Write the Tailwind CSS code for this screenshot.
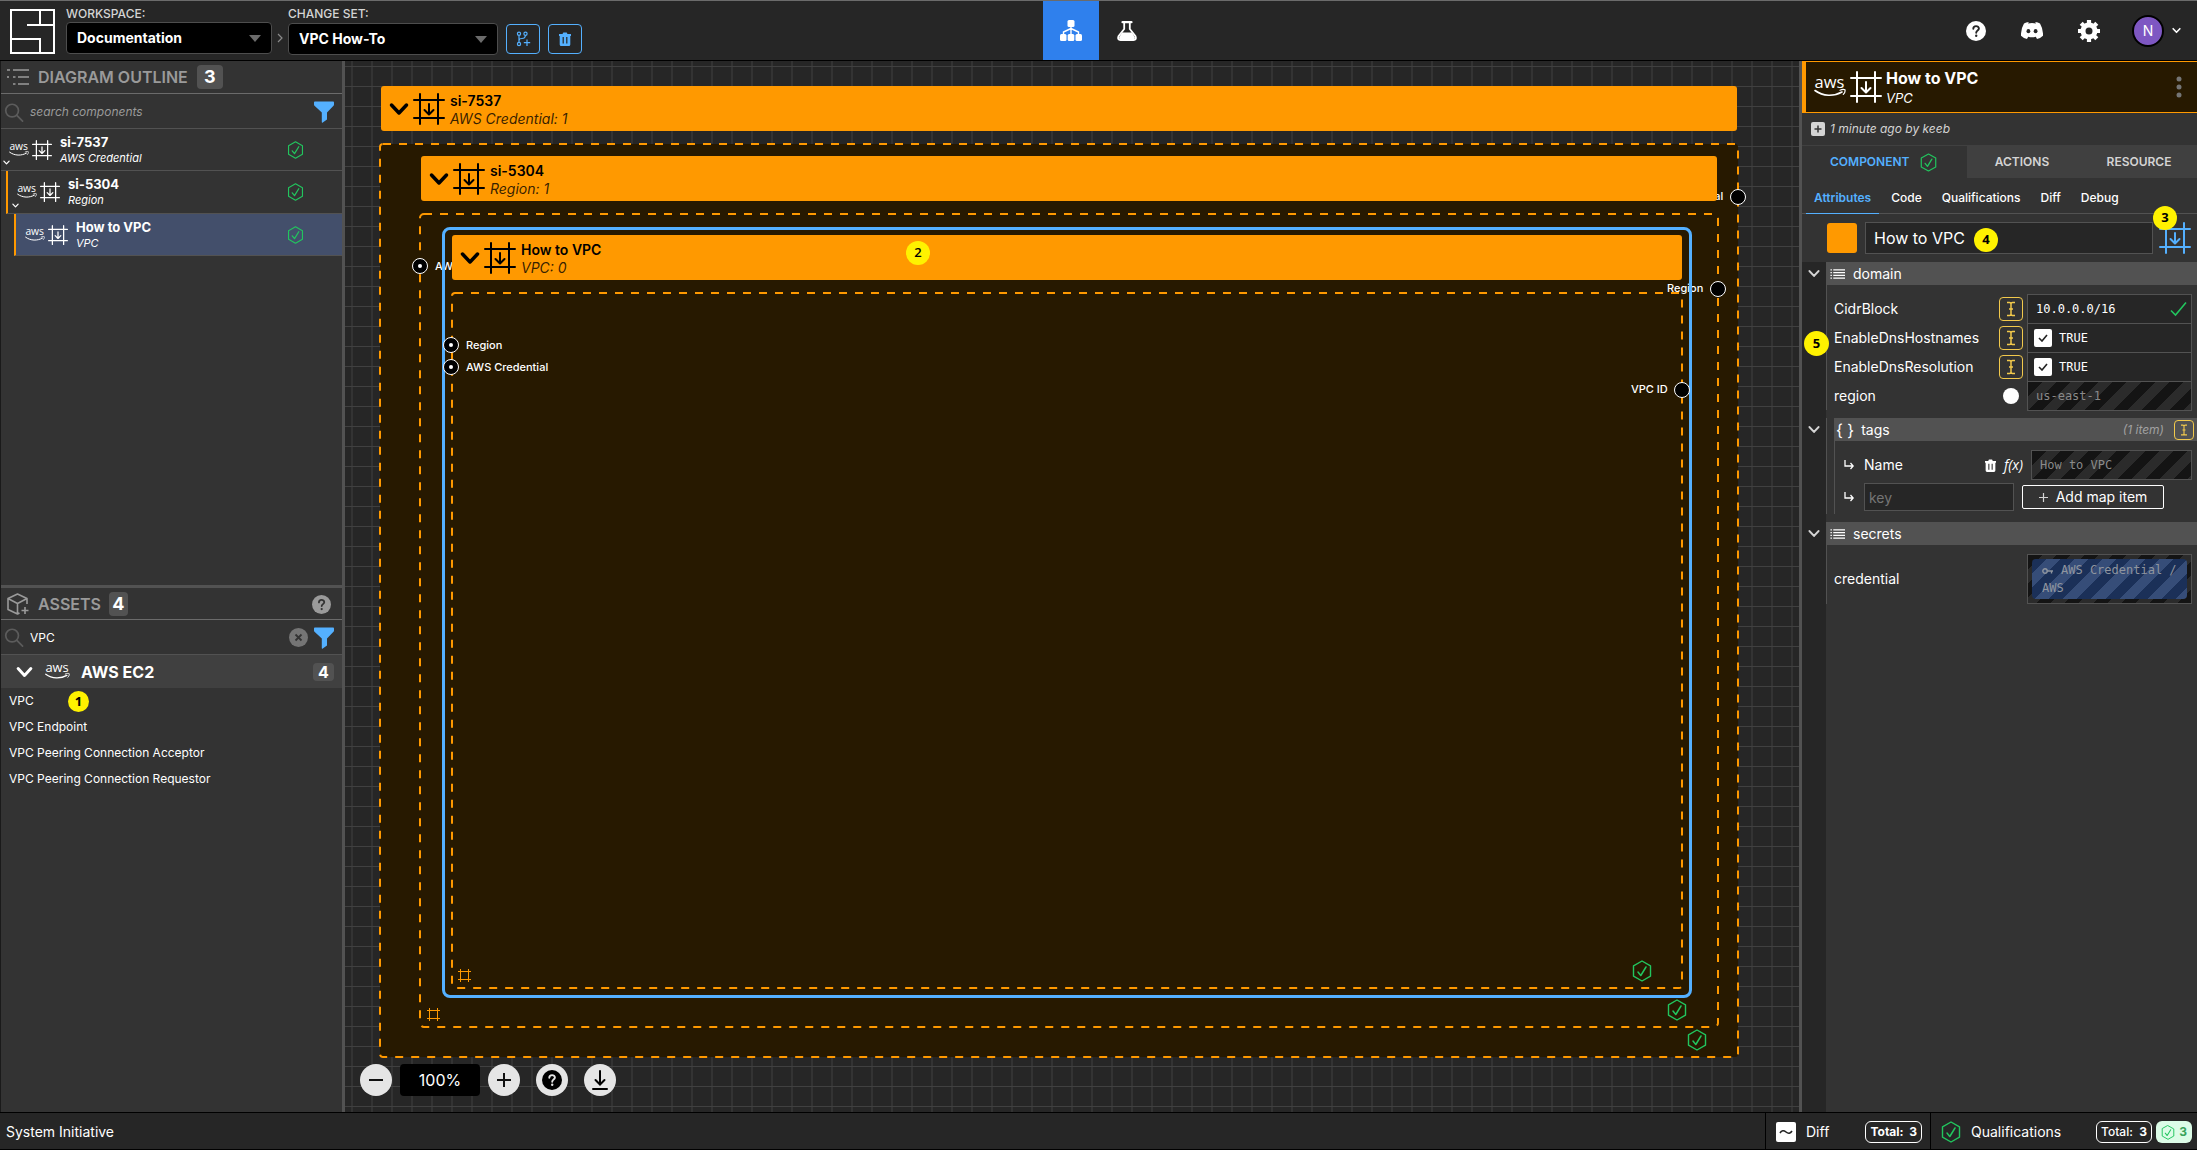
<!DOCTYPE html>
<html lang="en">
<head>
<meta charset="utf-8">
<title>System Initiative</title>
<script src="https://cdn.jsdelivr.net/npm/@tailwindcss/browser@4"></script>
</head>
<body class="flex h-screen flex-col overflow-hidden bg-[#262626] font-['Inter',sans-serif] text-white">

<svg class="hidden">
  <symbol id="frame" viewBox="0 0 32 32"><g fill="none" stroke="currentColor" stroke-width="2" stroke-linecap="round"><path d="M7 1v30M25 1v30M1 7h30M1 25h30"/><path d="M16 11v10M11.500 17l4.500 4.500l4.500-4.500" stroke-linejoin="round"/></g></symbol>
  <symbol id="hash" viewBox="0 0 13 13"><path d="M2.500 0v13M10.500 0v13M0 2.500h13M0 10.500h13" fill="none" stroke="currentColor" stroke-width="1"/></symbol>
  <symbol id="aws" viewBox="0 0 32 20"><text x="15.500" y="10.500" text-anchor="middle" font-family="Open Sans, sans-serif" font-size="16.500" fill="currentColor">aws</text><path d="M1 13.500c8 6 19 6 27 1.500" fill="none" stroke="currentColor" stroke-width="1.600" stroke-linecap="round"/><path d="M26 13.200c2-.9 4-1 5-.4c.3 1.600-.5 3.500-1.700 4.600" fill="none" stroke="currentColor" stroke-width="1.200" stroke-linecap="round"/></symbol>
  <symbol id="hexcheck" viewBox="0 0 20 22"><g fill="none" stroke="currentColor" stroke-linejoin="round" stroke-linecap="round"><path d="M10 1l8.500 4.800v10.400L10 21l-8.500-4.800V5.800z" stroke-width="1.400"/><path d="M6 12l2.800 3.500L14 7" stroke-width="1.500"/></g></symbol>
  <symbol id="chev" viewBox="0 0 20 14"><path d="M2.500 3l7.500 8l7.500-8" fill="none" stroke="currentColor" stroke-width="3.500" stroke-linecap="round" stroke-linejoin="round"/></symbol>
  <symbol id="search" viewBox="0 0 20 20"><g fill="none" stroke="currentColor" stroke-width="1.800" stroke-linecap="round"><ellipse cx="8" cy="8" rx="6.700" ry="6.700"/><path d="M13 13l6 6"/></g></symbol>
  <symbol id="funnel" viewBox="0 0 20 22"><path d="M.8.500h18.400q.8 0 .8 1v2q0 .8-.5 1.300L13 11.500v7L8.800 21.500q-1 .6-1-.5v-9.500L.5 4.800Q0 4.300 0 3.500v-2q0-1 .8-1z" fill="currentColor"/></symbol>
  <symbol id="help" viewBox="0 0 20 20"><circle cx="10" cy="10" r="10" fill="currentColor"/><path d="M7.300 7.800c0-3.600 5.600-3.500 5.600-.2c0 2-2.700 2-2.700 4.100" fill="none" stroke="var(--q,#262626)" stroke-width="1.900" stroke-linecap="round"/><circle cx="10.200" cy="14.800" r="1.200" fill="var(--q,#262626)"/></symbol>
  <symbol id="trash" viewBox="0 0 12 14"><path d="M0 2h3.500L4.300.5h3.400L8.500 2H12v2h-.7v8.500q0 1.500-1.500 1.500H2.200Q.7 14 .7 12.500V4H0z" fill="currentColor"/><path d="M4.200 5v6.500M7.800 5v6.500" stroke="var(--q,#262626)" stroke-width="1.200"/></symbol>
  <symbol id="list" viewBox="0 0 16 12"><path d="M3.500 1.500H16M3.500 4.500H16M3.500 7.500H16M3.500 10.500H16M.5 1.500h1.500M.5 4.500h1.500M.5 7.500h1.500M.5 10.500h1.500" fill="none" stroke="currentColor" stroke-width="1.300"/></symbol>
  <symbol id="ibeam" viewBox="0 0 10 16"><path d="M1 1.500h2.500Q5 1.500 5 3Q5 1.500 6.500 1.500H9M1 14.500h2.500Q5 14.500 5 13Q5 14.500 6.500 14.500H9M5 3v10M3 8h4" fill="none" stroke="currentColor" stroke-width="1.500"/></symbol>
  <symbol id="sub" viewBox="0 0 10 10"><path d="M1 0v6h8M6.500 3l2.700 3l-2.700 3" fill="none" stroke="currentColor" stroke-width="1.300"/></symbol>
</svg>

<header class="grid h-[61px] shrink-0 grid-cols-[1fr_auto_1fr] border-t border-b border-t-[#6b6b6b] border-b-black">
  <div class="flex items-start pl-[10px]">
    <svg class="mt-2 h-[45px] w-[45px]" viewBox="0 0 45 45" fill="none" stroke="#fff" stroke-width="2"><path d="M1 1h43v43H1zM30 1v15M17 16h27M1 30h29v14"/></svg>
    <div class="ml-[11px] mt-1 flex flex-col">
      <label for="ws" class="h-[17px] text-xs leading-[17px] font-medium text-neutral-300">WORKSPACE:</label>
      <div class="grid items-center">
        <select id="ws" class="col-start-1 row-start-1 h-8 w-[206px] appearance-none rounded-sm border border-[#4d4d4d] bg-black pl-[10px] text-sm font-bold"><option>Documentation</option></select>
        <svg class="pointer-events-none col-start-1 row-start-1 mr-[11px] h-[7px] w-3 justify-self-end" viewBox="0 0 12 7"><path d="M0 0h12L6 7z" fill="#6b6b6b"/></svg>
      </div>
    </div>
    <svg class="mx-[5px] mt-8 h-[10px] w-[6px]" viewBox="0 0 6 10"><path d="M1 1l4 4l-4 4" fill="none" stroke="#8a8a8a" stroke-width="1.200"/></svg>
    <div class="mt-1 flex flex-col">
      <label for="cs" class="h-[18px] text-xs leading-[17px] font-medium text-neutral-300">CHANGE SET:</label>
      <div class="grid items-center">
        <select id="cs" class="col-start-1 row-start-1 h-8 w-[210px] appearance-none rounded-sm border border-[#4d4d4d] bg-black pl-[10px] text-sm font-bold"><option>VPC How-To</option></select>
        <svg class="pointer-events-none col-start-1 row-start-1 mr-[11px] h-[7px] w-3 justify-self-end" viewBox="0 0 12 7"><path d="M0 0h12L6 7z" fill="#6b6b6b"/></svg>
      </div>
    </div>
    <div class="mt-[23px] ml-2 flex gap-2 text-[#54b0ff] [--q:#262626]">
      <button aria-label="Create change set" class="flex h-[30px] w-[34px] items-center justify-center rounded-sm border border-[#54b0ff]">
        <svg class="h-4 w-4" viewBox="0 0 16 16" fill="none" stroke="currentColor" stroke-width="1.200"><circle cx="4" cy="2.800" r="1.600"/><circle cx="4" cy="13" r="1.600"/><circle cx="10.500" cy="2.800" r="1.600"/><path d="M4 4.500v7M4 9.500q0-2 3-2t3.500-3M12 8.500v6.500M8.800 11.700h6.400"/></svg>
      </button>
      <button aria-label="Abandon change set" class="flex h-[30px] w-[34px] items-center justify-center rounded-sm border border-[#54b0ff]"><svg class="h-[14px] w-3"><use href="#trash"/></svg></button>
    </div>
  </div>
  <nav class="flex">
    <a href="#model" aria-label="Model" class="flex w-14 items-center justify-center bg-[#2f80ed]">
      <svg class="h-[22px] w-[22px]" viewBox="0 0 22 22"><g fill="#fff"><rect x="7.500" y="0" width="7" height="7" rx="1.500"/><rect x="0" y="14" width="6.500" height="7" rx="1.500"/><rect x="7.700" y="14" width="6.600" height="7" rx="1.500"/><rect x="15.500" y="14" width="6.500" height="7" rx="1.500"/></g><path d="M11 6v8M11 8.500L3.500 12v2M11 8.500l7.500 3.500v2" fill="none" stroke="#fff" stroke-width="1.400"/></svg>
    </a>
    <a href="#lab" aria-label="Lab" class="flex w-14 items-center justify-center">
      <svg class="h-5 w-5" viewBox="0 0 20 20"><path d="M5.500 1.200h9" stroke="#fff" stroke-width="2.200" stroke-linecap="round"/><path d="M7.200 2v6L1.500 15.300Q.2 19 3.500 19h13q3.300 0 2-3.700L12.800 8V2" fill="none" stroke="#fff" stroke-width="1.800"/><path d="M5 11.500h10l3 5q0 2-1.500 2h-13q-1.500 0-1.500-2z" fill="#fff"/></svg>
    </a>
  </nav>
  <div class="flex items-center justify-end pr-4">
    <div class="flex items-center gap-[35px]">
      <button aria-label="Help" class="[--q:#262626]"><svg class="h-5 w-5"><use href="#help"/></svg></button>
      <button aria-label="Discord"><svg class="h-[17px] w-[22px]" viewBox="0 0 22 17"><path d="M7.800 0L7 1.500q4-.8 8 0L14.200 0Q17 .3 19 1.500Q22.300 7 22 13.800Q19.500 16.400 16 17l-1.200-2.200q-3.800 1-7.600 0L6 17Q2.500 16.400 0 13.800Q-.3 7 3 1.500Q5 .3 7.800 0z" fill="#fff"/><ellipse cx="7.400" cy="9.200" rx="1.900" ry="2.100" fill="#262626"/><ellipse cx="14.600" cy="9.200" rx="1.900" ry="2.100" fill="#262626"/></svg></button>
      <button aria-label="Settings"><svg class="h-[22px] w-[22px]" viewBox="0 0 22 22"><circle cx="11" cy="11" r="6" fill="none" stroke="#fff" stroke-width="5"/><path d="M11 0v4M11 18v4M0 11h4M18 11h4M3.200 3.200L6 6M16 16l2.800 2.800M3.200 18.800L6 16M16 6l2.800-2.800" stroke="#fff" stroke-width="4.200"/></svg></button>
    </div>
    <button class="ml-8 flex items-center gap-2"><span class="flex h-8 w-8 items-center justify-center rounded-full border-2 border-black bg-[#7e57c2] text-sm">N</span><svg class="h-[7px] w-[9px]"><use href="#chev"/></svg></button>
  </div>
</header>

<main class="flex min-h-0 flex-1">
  <aside class="flex w-[345px] shrink-0 flex-col border-r-[3px] border-l border-r-[#525252] border-l-[#1a1a1a] bg-[#333]">
    <section class="flex flex-1 flex-col">
      <div class="flex h-[33px] items-center border-b border-[#6b6b6b] pl-[6px] text-[#9a9a9a]">
        <svg class="h-[18px] w-[22px]" viewBox="0 0 22 18" fill="none" stroke="currentColor" stroke-width="1.600"><path d="M6 2h16M11 9h11M11 16h11M0 2h3M6 9h2.500M6 16h2.500M1 8v2"/></svg>
        <h2 class="ml-[9px] text-base font-semibold">DIAGRAM OUTLINE</h2>
        <span class="ml-[9px] flex h-6 w-[26px] items-center justify-center rounded bg-[#525252] text-lg font-bold text-white">3</span>
      </div>
      <div class="flex h-[35px] items-center border-b border-[#525252] pt-[2px] pr-2 pl-[3px]">
        <svg class="h-[19px] w-5 text-[#5c5c5c]"><use href="#search"/></svg>
        <input aria-label="search components" placeholder="search components" class="ml-[6px] flex-1 text-xs placeholder:text-[#9a9a9a] placeholder:italic">
        <button aria-label="Filter" class="text-[#54b0ff]"><svg class="h-[22px] w-5"><use href="#funnel"/></svg></button>
      </div>
      <ul>
        <li class="relative flex h-[42px] items-center border-b border-[#525252] pr-[38px] pl-2">
          <svg class="h-[14px] w-5"><use href="#aws"/></svg><svg class="ml-[3px] h-5 w-5"><use href="#frame"/></svg>
          <div class="ml-2 flex-1"><div class="text-[13px] leading-4 font-bold">si-7537</div><div class="text-[11px] leading-4 italic">AWS Credential</div></div>
          <svg class="h-[18px] w-[17px] text-[#22c55e]"><use href="#hexcheck"/></svg>
          <svg class="absolute bottom-[5px] left-[2px] h-[5px] w-[7px]"><use href="#chev"/></svg>
        </li>
        <li class="relative ml-[5px] flex h-[43px] items-center border-b border-l-2 border-b-[#525252] border-l-[#ff9900] pr-[38px] pl-[9px]">
          <svg class="h-[14px] w-5"><use href="#aws"/></svg><svg class="ml-[3px] h-5 w-5"><use href="#frame"/></svg>
          <div class="ml-2 flex-1"><div class="text-[13px] leading-4 font-bold">si-5304</div><div class="text-[11px] leading-4 italic">Region</div></div>
          <svg class="h-[18px] w-[17px] text-[#22c55e]"><use href="#hexcheck"/></svg>
          <svg class="absolute bottom-[5px] left-1 h-[5px] w-[7px]"><use href="#chev"/></svg>
        </li>
        <li class="ml-[13px] flex h-[42px] items-center border-b border-l-2 border-b-[#525252] border-l-[#ff9900] bg-[#434f6b] pr-[38px] pl-[9px]">
          <svg class="h-[14px] w-5"><use href="#aws"/></svg><svg class="ml-[3px] h-5 w-5"><use href="#frame"/></svg>
          <div class="ml-2 flex-1"><div class="text-[13px] leading-4 font-bold">How to VPC</div><div class="text-[11px] leading-4 italic">VPC</div></div>
          <svg class="h-[18px] w-[17px] text-[#22c55e]"><use href="#hexcheck"/></svg>
        </li>
      </ul>
    </section>
    <section class="flex flex-1 flex-col border-t-[3px] border-[#525252]">
      <div class="flex h-8 items-center border-b border-[#6b6b6b] pt-px pr-[11px] pl-[6px] text-[#9a9a9a]">
        <svg class="h-[22px] w-[22px]" viewBox="0 0 22 22" fill="none" stroke="currentColor" stroke-width="1.600" stroke-linejoin="round"><path d="M20 11V5.500L10.500 1L1 5.500v11l9.500 4.500l2-1M1 5.500l9.500 5l9.500-5M10.500 10.500V21M18 14v7M14.500 17.500h7"/></svg>
        <h2 class="ml-[9px] text-base font-semibold">ASSETS</h2>
        <span class="mx-2 flex h-6 w-[19px] items-center justify-center rounded bg-[#525252] text-lg font-bold text-white">4</span>
        <button aria-label="Help" class="ml-auto [--q:#333]"><svg class="h-[19px] w-[19px]"><use href="#help"/></svg></button>
      </div>
      <div class="flex h-[35px] items-center border-b border-[#525252] pt-px pr-2 pl-[3px]">
        <svg class="h-[19px] w-5 text-[#5c5c5c]"><use href="#search"/></svg>
        <input aria-label="search assets" value="VPC" class="ml-[6px] min-w-0 flex-1 text-xs">
        <button aria-label="Clear" class="mr-[6px]"><svg class="h-[19px] w-[19px]" viewBox="0 0 19 19"><circle cx="9.500" cy="9.500" r="9.500" fill="#757575"/><path d="M6.500 6.500l6 6M12.500 6.500l-6 6" stroke="#333" stroke-width="1.800"/></svg></button>
        <button aria-label="Filter" class="text-[#54b0ff]"><svg class="h-[22px] w-5"><use href="#funnel"/></svg></button>
      </div>
      <button class="flex h-[33px] items-center bg-[#404040] pr-2 pl-[15px] text-left">
        <svg class="h-3 w-[17px]"><use href="#chev"/></svg>
        <svg class="ml-3 h-[17px] w-[25px]"><use href="#aws"/></svg>
        <span class="ml-[11px] text-base font-bold">AWS EC2</span>
        <span class="ml-auto flex h-[18px] w-[21px] items-center justify-center rounded bg-[#525252] text-base font-bold">4</span>
      </button>
      <div class="relative">
        <ul class="pl-2 text-xs leading-[26px]">
          <li>VPC</li><li>VPC Endpoint</li><li>VPC Peering Connection Acceptor</li><li>VPC Peering Connection Requestor</li>
        </ul>
        <span class="absolute top-[3px] left-[67px] flex h-[21px] w-[21px] items-center justify-center rounded-full bg-[#fff200] font-['Open_Sans',sans-serif] text-[13px] font-bold text-black">1</span>
      </div>
    </section>
  </aside>

  <!-- diagram canvas: nodes are placed at their diagram coordinates -->
  <section class="relative min-w-0 flex-1 overflow-hidden bg-[linear-gradient(#404040_1px,transparent_1px),linear-gradient(90deg,#333_2px,transparent_2px)] bg-[position:6px_5px] bg-[size:20px_20px]">
    <div class="absolute top-[83px] left-[35px] h-[913px] w-[1358px]">
      <svg class="h-full w-full overflow-visible"><rect width="100%" height="100%" rx="3" fill="#271900" stroke="#ff9900" stroke-width="2" stroke-dasharray="8 8"/></svg>
    </div>
    <div class="absolute top-[25px] left-9 flex h-[45px] w-[1356px] items-center rounded-[3px] bg-[#ff9900] pl-2 text-black">
      <svg class="h-[14px] w-5"><use href="#chev"/></svg><svg class="ml-1 h-8 w-8"><use href="#frame"/></svg>
      <div class="ml-[5px] pt-[2px] text-sm leading-[18px]"><div class="font-semibold">si-7537</div><div class="text-black/80 italic">AWS Credential: 1</div></div>
    </div>

    <div class="absolute top-[153px] left-[75px] h-[813px] w-[1298px]">
      <svg class="h-full w-full overflow-visible"><rect width="100%" height="100%" rx="4" fill="#271900" stroke="#ff9900" stroke-width="2" stroke-dasharray="8 8"/></svg>
    </div>
    <span class="absolute top-[127px] left-[1296px] text-[11px] leading-4 font-medium">AWS Credential</span>
    <span class="absolute top-[128px] left-[1385px] h-4 w-4 rounded-full border border-white bg-black"></span>
    <div class="absolute top-[95px] left-[76px] flex h-[45px] w-[1296px] items-center rounded-[3px] bg-[#ff9900] pl-2 text-black">
      <svg class="h-[14px] w-5"><use href="#chev"/></svg><svg class="ml-1 h-8 w-8"><use href="#frame"/></svg>
      <div class="ml-[5px] pt-[2px] text-sm leading-[18px]"><div class="font-semibold">si-5304</div><div class="text-black/80 italic">Region: 1</div></div>
    </div>
    <span class="absolute top-[197px] left-[67px] flex h-4 w-4 items-center justify-center rounded-full border border-white bg-black"><i class="h-1 w-1 rounded-full bg-white"></i></span>
    <span class="absolute top-[197px] left-[90px] text-[11px] leading-4 font-medium">AWS Credential</span>

    <div class="absolute top-[232px] left-[107px] h-[695px] w-[1230px]">
      <svg class="h-full w-full overflow-visible"><rect width="100%" height="100%" rx="3" fill="#271900" stroke="#ff9900" stroke-width="2" stroke-dasharray="8 8"/></svg>
    </div>
    <span class="absolute top-[219px] left-[1322px] text-[11px] leading-4 font-medium">Region</span>
    <span class="absolute top-[220px] left-[1365px] h-4 w-4 rounded-full border border-white bg-black"></span>
    <div class="absolute top-[166px] left-[97px] h-[771px] w-[1250px] rounded-lg border-[3px] border-[#54b0ff]"></div>
    <div class="absolute top-[174px] left-[107px] flex h-[45px] w-[1230px] items-center rounded-[3px] bg-[#ff9900] pl-2 text-black">
      <svg class="h-[14px] w-5"><use href="#chev"/></svg><svg class="ml-1 h-8 w-8"><use href="#frame"/></svg>
      <div class="ml-[5px] pt-[2px] text-sm leading-[18px]"><div class="font-semibold">How to VPC</div><div class="text-black/80 italic">VPC: 0</div></div>
    </div>
    <span class="absolute top-[276px] left-[98px] flex h-4 w-4 items-center justify-center rounded-full border border-white bg-black"><i class="h-1 w-1 rounded-full bg-white"></i></span>
    <span class="absolute top-[276px] left-[121px] text-[11px] leading-4 font-medium">Region</span>
    <span class="absolute top-[298px] left-[98px] flex h-4 w-4 items-center justify-center rounded-full border border-white bg-black"><i class="h-1 w-1 rounded-full bg-white"></i></span>
    <span class="absolute top-[298px] left-[121px] text-[11px] leading-4 font-medium">AWS Credential</span>
    <span class="absolute top-[320px] left-[1286px] text-[11px] leading-4 font-medium">VPC ID</span>
    <span class="absolute top-[321px] left-[1329px] h-4 w-4 rounded-full border border-white bg-black"></span>
    <svg class="absolute top-[908px] left-[113px] h-[13px] w-[13px] text-[#ff9900]"><use href="#hash"/></svg>
    <svg class="absolute top-[947px] left-[82px] h-[13px] w-[13px] text-[#ff9900]"><use href="#hash"/></svg>
    <svg class="absolute top-[899px] left-[1287px] h-[22px] w-5 text-[#22c55e]"><use href="#hexcheck"/></svg>
    <svg class="absolute top-[938px] left-[1322px] h-[22px] w-5 text-[#22c55e]"><use href="#hexcheck"/></svg>
    <svg class="absolute top-[968px] left-[1342px] h-[22px] w-5 text-[#22c55e]"><use href="#hexcheck"/></svg>
    <span class="absolute top-[180px] left-[561px] flex h-6 w-6 items-center justify-center rounded-full bg-[#fff200] font-['Open_Sans',sans-serif] text-[13px] font-semibold text-black">2</span>

    <div class="absolute bottom-4 left-[15px] flex gap-4 text-black">
      <div class="flex gap-2">
        <button aria-label="Zoom out" class="flex h-8 w-8 items-center justify-center rounded-full bg-[#e5e5e5]"><svg class="h-4 w-4" viewBox="0 0 16 16"><path d="M1 8h14" stroke="#111" stroke-width="2"/></svg></button>
        <button class="h-8 w-20 rounded bg-black text-base text-white">100%</button>
        <button aria-label="Zoom in" class="flex h-8 w-8 items-center justify-center rounded-full bg-[#e5e5e5]"><svg class="h-4 w-4" viewBox="0 0 16 16"><path d="M1 8h14M8 1v14" stroke="#111" stroke-width="2"/></svg></button>
      </div>
      <button aria-label="Help" class="flex h-8 w-8 items-center justify-center rounded-full bg-[#e5e5e5] [--q:#e5e5e5]"><svg class="h-5 w-5"><use href="#help"/></svg></button>
      <button aria-label="Download" class="flex h-8 w-8 items-center justify-center rounded-full bg-[#e5e5e5]"><svg class="h-5 w-4" viewBox="0 0 16 20" fill="none" stroke="#000" stroke-width="2" stroke-linecap="round"><path d="M8 1v13M3.500 10l4.500 4.500l4.500-4.500M1 19h14"/></svg></button>
    </div>
  </section>

  <aside class="flex w-[398px] shrink-0 flex-col border-l-[3px] border-[#525252] bg-[#333]">
    <div class="flex h-[52px] items-center border-t border-b border-l-4 border-[#ff9900] bg-[#271900] pr-[15px] pl-2">
      <svg class="h-5 w-8"><use href="#aws"/></svg>
      <svg class="ml-1 h-8 w-8"><use href="#frame"/></svg>
      <div class="ml-1 flex-1 pt-px"><h1 class="text-base leading-5 font-bold">How to VPC</h1><div class="text-[13px] leading-5 italic">VPC</div></div>
      <button aria-label="Menu"><svg class="h-[22px] w-[6px]" viewBox="0 0 6 22" fill="#757575"><circle cx="3" cy="3" r="2.500"/><circle cx="3" cy="11" r="2.500"/><circle cx="3" cy="19" r="2.500"/></svg></button>
    </div>
    <div class="flex h-8 items-center gap-[5px] pl-[9px] text-neutral-300">
      <svg class="h-[14px] w-[14px]" viewBox="0 0 14 14"><rect width="14" height="14" rx="2" fill="#d4d4d4"/><path d="M7 3.500v7M3.500 7h7" stroke="#333" stroke-width="1.500"/></svg>
      <span class="text-xs italic">1 minute ago by keeb</span>
    </div>
    <div class="flex h-[33px] border-t border-[#404040] text-xs font-semibold text-neutral-300">
      <button class="flex w-[165px] items-center gap-[10px] pl-7 text-[#54b0ff]">COMPONENT<svg class="h-[19px] w-[17px] text-[#22c55e]"><use href="#hexcheck"/></svg></button>
      <button class="w-[110px] bg-[#404040]">ACTIONS</button>
      <button class="flex-1 bg-[#404040] pl-1">RESOURCE</button>
    </div>
    <div class="flex h-9 border-b border-[#525252] pl-1 text-xs font-medium">
      <button class="-mb-px border-b border-[#54b0ff] px-2 pt-1 font-semibold text-[#54b0ff]">Attributes</button>
      <button class="ml-[3px] px-[9px] pt-1">Code</button>
      <button class="ml-[2px] px-[9px] pt-1">Qualifications</button>
      <button class="ml-[2px] px-[9px] pt-1">Diff</button>
      <button class="ml-[2px] px-[9px] pt-1">Debug</button>
    </div>
    <div class="relative flex h-12 items-center pr-[6px] pl-[25px]">
      <button aria-label="Color" class="h-[30px] w-[30px] rounded-[3px] bg-[#ff9900]"></button>
      <input aria-label="Name" value="How to VPC" class="mr-[6px] ml-2 h-8 min-w-0 flex-1 border border-[#525252] bg-[#262626] px-2 text-base">
      <button aria-label="Change frame" class="text-[#54b0ff]"><svg class="h-8 w-8"><use href="#frame"/></svg></button>
      <span class="absolute -top-2 right-5 flex h-6 w-6 items-center justify-center rounded-full bg-[#fff200] font-['Open_Sans',sans-serif] text-[13px] font-bold text-black">3</span>
      <span class="absolute top-[14px] left-[172px] flex h-6 w-6 items-center justify-center rounded-full bg-[#fff200] font-['Open_Sans',sans-serif] text-[13px] font-bold text-black">4</span>
    </div>
    <div class="relative flex flex-1 flex-col bg-[linear-gradient(90deg,#262626_24px,#333_24px)] text-sm">
      <div class="flex h-[23px]">
        <button aria-label="Collapse" class="flex w-6 items-center justify-center text-neutral-300"><svg class="h-[9px] w-3"><use href="#chev"/></svg></button>
        <div class="flex flex-1 items-center bg-[#525252] pl-1"><svg class="h-3 w-[15px]"><use href="#list"/></svg><span class="ml-2">domain</span></div>
      </div>
      <div class="ml-6 flex flex-col border-l border-[#525252] pt-[9px] pr-[5px] pl-[7px]">
        <div class="flex h-[29px] items-center">
          <label for="cidr" class="flex-1">CidrBlock</label>
          <span class="mr-1 flex h-6 w-6 items-center justify-center rounded-sm border border-[#f2c94c] text-[#f2c94c]"><svg class="h-4 w-[10px]"><use href="#ibeam"/></svg></span>
          <div class="flex h-[30px] w-[165px] items-center border border-[#525252] bg-[#262626] pr-1 pl-2"><input id="cidr" value="10.0.0.0/16" class="min-w-0 flex-1 font-['DejaVu_Sans_Mono',monospace] text-xs"><svg class="h-4 w-[17px]" viewBox="0 0 17 16"><path d="M1 9.500L5.500 14L16 1.500" fill="none" stroke="#22c55e" stroke-width="1.600"/></svg></div>
        </div>
        <div class="flex h-[29px] items-center">
          <label for="hosts" class="flex-1">EnableDnsHostnames</label>
          <span class="mr-1 flex h-6 w-6 items-center justify-center rounded-sm border border-[#f2c94c] text-[#f2c94c]"><svg class="h-4 w-[10px]"><use href="#ibeam"/></svg></span>
          <div class="flex h-[30px] w-[165px] items-center border border-[#525252] bg-[#262626] pl-[6px]"><span class="grid items-center justify-items-center"><input id="hosts" type="checkbox" checked class="col-start-1 row-start-1 h-[18px] w-[18px] appearance-none rounded-xs bg-white"><svg class="pointer-events-none col-start-1 row-start-1 h-2 w-[10px]" viewBox="0 0 10 8"><path d="M1 4l3 3l5-6" fill="none" stroke="#222" stroke-width="1.600"/></svg></span><span class="ml-[7px] font-['DejaVu_Sans_Mono',monospace] text-xs">TRUE</span></div>
        </div>
        <div class="flex h-[29px] items-center">
          <label for="reso" class="flex-1">EnableDnsResolution</label>
          <span class="mr-1 flex h-6 w-6 items-center justify-center rounded-sm border border-[#f2c94c] text-[#f2c94c]"><svg class="h-4 w-[10px]"><use href="#ibeam"/></svg></span>
          <div class="flex h-[30px] w-[165px] items-center border border-[#525252] bg-[#262626] pl-[6px]"><span class="grid items-center justify-items-center"><input id="reso" type="checkbox" checked class="col-start-1 row-start-1 h-[18px] w-[18px] appearance-none rounded-xs bg-white"><svg class="pointer-events-none col-start-1 row-start-1 h-2 w-[10px]" viewBox="0 0 10 8"><path d="M1 4l3 3l5-6" fill="none" stroke="#222" stroke-width="1.600"/></svg></span><span class="ml-[7px] font-['DejaVu_Sans_Mono',monospace] text-xs">TRUE</span></div>
        </div>
        <div class="flex h-[29px] items-center">
          <label for="reg" class="flex-1">region</label>
          <span class="mr-2 h-4 w-4 rounded-full bg-white"></span>
          <input id="reg" value="us-east-1" disabled class="h-[30px] w-[165px] border border-[#525252] bg-[repeating-linear-gradient(135deg,#141414_0px_10px,#2b2b2b_10px_20px)] px-2 font-['DejaVu_Sans_Mono',monospace] text-xs text-[#8a8a8a]">
        </div>
      </div>
      <div class="flex h-[31px] pt-2">
        <button aria-label="Collapse" class="flex w-6 items-center justify-center text-neutral-300"><svg class="h-[9px] w-3"><use href="#chev"/></svg></button>
        <div class="flex flex-1 border-l border-[#525252] pl-[7px]"><div class="flex flex-1 items-center bg-[#525252] pr-[3px] pl-[2px]"><span class="text-base">{ }</span><span class="ml-[7px]">tags</span><span class="ml-auto text-xs text-neutral-400 italic">(1 item)</span><span class="ml-[10px] flex h-5 w-5 items-center justify-center rounded-sm border border-[#f2c94c] text-[#f2c94c]"><svg class="h-3 w-2"><use href="#ibeam"/></svg></span></div></div>
      </div>
      <div class="ml-6 border-l border-[#525252] pl-[7px]">
        <div class="flex flex-col gap-[3px] border-l border-[#525252] pt-[9px] pr-[5px] pb-[3px] pl-[9px]">
          <div class="flex h-[30px] items-center">
            <svg class="h-[10px] w-[10px]"><use href="#sub"/></svg>
            <label for="tagname" class="ml-[10px] flex-1">Name</label>
            <button aria-label="Delete" class="[--q:#333]"><svg class="h-[13px] w-[11px]"><use href="#trash"/></svg></button>
            <span class="mx-2 font-['Open_Sans',sans-serif] text-sm italic">f(x)</span>
            <input id="tagname" value="How to VPC" disabled class="h-[30px] w-[161px] border border-[#525252] bg-[repeating-linear-gradient(135deg,#141414_0px_10px,#2b2b2b_10px_20px)] px-2 font-['DejaVu_Sans_Mono',monospace] text-xs text-[#8a8a8a]">
          </div>
          <div class="flex h-7 items-center">
            <svg class="h-[10px] w-[10px]"><use href="#sub"/></svg>
            <input aria-label="key" placeholder="key" class="ml-[10px] h-7 w-[150px] border border-[#525252] bg-[#262626] px-1 placeholder:text-[#757575]">
            <button class="ml-2 flex h-6 w-[142px] items-center justify-center gap-2 rounded-xs border border-white"><svg class="h-[9px] w-[9px]" viewBox="0 0 9 9"><path d="M4.500 0v9M0 4.500h9" stroke="#d4d4d4" stroke-width="1.200"/></svg>Add map item</button>
          </div>
        </div>
      </div>
      <div class="flex h-[31px] pt-2">
        <button aria-label="Collapse" class="flex w-6 items-center justify-center text-neutral-300"><svg class="h-[9px] w-3"><use href="#chev"/></svg></button>
        <div class="flex flex-1 items-center bg-[#525252] pl-1"><svg class="h-3 w-[15px]"><use href="#list"/></svg><span class="ml-2">secrets</span></div>
      </div>
      <div class="ml-6 flex items-center border-l border-[#525252] pt-[9px] pr-[5px] pl-[7px]">
        <span class="flex-1">credential</span>
        <div class="h-[50px] w-[165px] border border-[#525252] bg-[repeating-linear-gradient(135deg,#141414_0px_10px,#2b2b2b_10px_20px)] p-1">
          <div class="h-10 rounded bg-[repeating-linear-gradient(135deg,#1b3058_0px_10px,#364d78_10px_20px)] px-[10px] pt-[2px] font-['DejaVu_Sans_Mono',monospace] text-xs leading-[18px] text-[#8f959f]"><svg class="mr-2 inline h-[6px] w-[11px]" viewBox="0 0 11 6" fill="none" stroke="currentColor" stroke-width="1.400"><circle cx="3" cy="3" r="2.200"/><path d="M5 3h6M9.500 3v2.500"/></svg>AWS Credential / AWS</div>
        </div>
      </div>
      <span class="absolute top-[69px] left-[2px] flex h-[25px] w-[25px] items-center justify-center rounded-full bg-[#fff200] font-['Open_Sans',sans-serif] text-[13px] font-bold text-black">5</span>
    </div>
  </aside>
</main>

<footer class="flex h-[38px] shrink-0 items-center border-t border-b border-black text-sm">
  <span class="flex-1 pt-[2px] pl-[6px]">System Initiative</span>
  <div class="flex h-full w-[165px] items-center border-l border-black pt-[2px] pr-2 pl-[10px]">
    <svg class="h-5 w-5" viewBox="0 0 20 20"><rect width="20" height="20" rx="2" fill="#fff"/><path d="M4 11q2.500-4 6-1t6-1" fill="none" stroke="#222" stroke-width="1.600"/></svg>
    <span class="ml-[10px]">Diff</span>
    <span class="ml-auto rounded-md border border-white px-1 text-xs leading-5 font-bold">Total:&nbsp; 3</span>
  </div>
  <div class="flex h-full w-[267px] items-center border-l border-black pt-[2px] pr-[5px] pl-[10px]">
    <svg class="h-[22px] w-5 text-[#22c55e]"><use href="#hexcheck"/></svg>
    <span class="ml-[10px]">Qualifications</span>
    <span class="ml-auto rounded-md border border-white px-1 text-xs leading-5 font-medium">Total:&nbsp; <b>3</b></span>
    <span class="ml-1 flex h-[22px] w-9 items-center justify-center gap-1 rounded-md bg-[#dcfce7] text-xs font-bold text-[#3aa35c]"><svg class="h-[15px] w-[14px] text-[#22c55e]"><use href="#hexcheck"/></svg>3</span>
  </div>
</footer>
</body>
</html>
